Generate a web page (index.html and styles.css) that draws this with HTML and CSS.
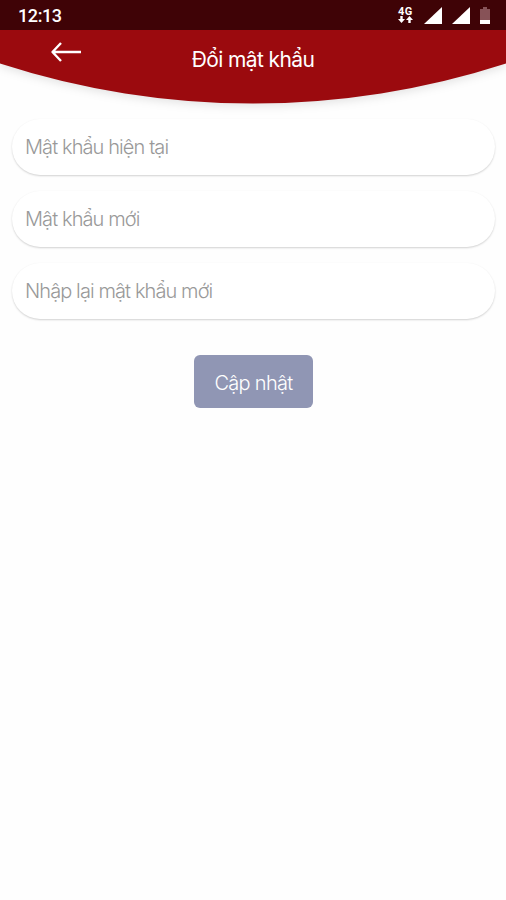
FILE: index.html
```html
<!DOCTYPE html>
<html lang="vi">
<head>
  <meta charset="UTF-8">
  <meta name="viewport" content="width=device-width, initial-scale=1.0">
  <title>Đổi mật khẩu</title>
  <link rel="stylesheet" href="styles.css">
</head>
<body>
<div class="status">
  <span class="time">12:13</span>
  <div class="status-icons">
    <div class="network">
      <span>4G</span>
      <svg width="15" height="7" viewBox="0 0 15 7">
        <path d="M2.300 0h2.400v3H7L3.500 7 0 3h2.300zM10.300 7V4H8L11.500 0 15 4h-2.300v3z" fill="#fff"/>
      </svg>
    </div>
    <svg class="signal" width="18" height="17" viewBox="0 0 18 17"><path d="M18 0v17H0z" fill="#fff"/></svg>
    <svg class="signal" width="18" height="17" viewBox="0 0 18 17"><path d="M18 0v17H0z" fill="#fff"/></svg>
    <svg class="battery" width="10" height="17" viewBox="0 0 10 17">
      <path d="M3 0h4v2h3v11H0V2h3z" fill="#875257"/>
      <path d="M0 13h10v4H0z" fill="#fff"/>
    </svg>
  </div>
</div>

<div class="header">
  <svg class="curve" width="506" height="74" viewBox="0 0 506 74">
    <path d="M0 0H506V33.500A820 820 0 0 1 0 33.500z" fill="#9b0a0e"/>
  </svg>
  <a class="back">
    <svg width="32" height="22" viewBox="0 0 32 22">
      <path d="M11 2L2.500 11l8.500 9M2.500 11H31" fill="none" stroke="#fff" stroke-width="2.400" stroke-linejoin="round"/>
    </svg>
  </a>
  <h1 class="title">Đổi mật khẩu</h1>
</div>

<form class="form">
  <input class="field" type="text" placeholder="Mật khẩu hiện tại">
  <input class="field" type="text" placeholder="Mật khẩu mới">
  <input class="field" type="text" placeholder="Nhập lại mật khẩu mới">
  <button class="update" type="button">Cập nhật</button>
</form>
</body>
</html>
```
FILE: styles.css
```css
* {
  box-sizing: border-box;
}
body {
  margin: 0;
  background: #fefefe;
  font-family: Inter, "Liberation Sans", sans-serif;
}
svg {
  display: block;
}

.status {
  display: flex;
  justify-content: space-between;
  height: 30px;
  padding: 7px 16px 0 18px;
  background: #3f0306;
  color: #fff;
}
.time {
  font: 500 18px/18px Roboto, sans-serif;
  letter-spacing: -0.4px;
}
.status-icons {
  display: flex;
  align-items: flex-start;
}
.network {
  width: 15px;
  margin-right: 11px;
}
.network span {
  display: block;
  height: 9px;
  font: 700 11px/9px Roboto, sans-serif;
  letter-spacing: 0.5px;
}
.signal {
  margin-right: 10px;
}

.header {
  display: grid;
  height: 74px;
}
.header > * {
  grid-area: 1 / 1;
}
.curve {
  overflow: visible;
  filter: drop-shadow(0 3px 4px rgba(0, 0, 0, 0.1));
  clip-path: inset(0 0 -20px 0);
}
.back {
  z-index: 1;
  justify-self: start;
  margin: 11px 0 0 50px;
}
.title {
  z-index: 1;
  margin: 16px 0 0;
  text-align: center;
  color: #fff;
  font-size: 21px;
  font-weight: 400;
  line-height: 28px;
  letter-spacing: -0.6px;
}

.form {
  display: flex;
  flex-direction: column;
  align-items: center;
  gap: 16px;
  padding: 15px 11px 0 12px;
}
.field {
  width: 100%;
  height: 56px;
  padding: 0 13px;
  border: 0;
  border-radius: 28px;
  background: #fff;
  box-shadow: 0 1px 2px rgba(0, 0, 0, 0.18);
  font: 300 20px/32px Inter, sans-serif;
  letter-spacing: -0.9px;
}
.field::placeholder {
  color: #999;
  line-height: 32px;
}
.update {
  width: 119px;
  height: 53px;
  margin-top: 20px;
  padding: 2px 0 0;
  border: 0;
  border-radius: 6px;
  background: #9096b4;
  color: #fff;
  font: 300 20px Inter, sans-serif;
  letter-spacing: -0.7px;
}
```
